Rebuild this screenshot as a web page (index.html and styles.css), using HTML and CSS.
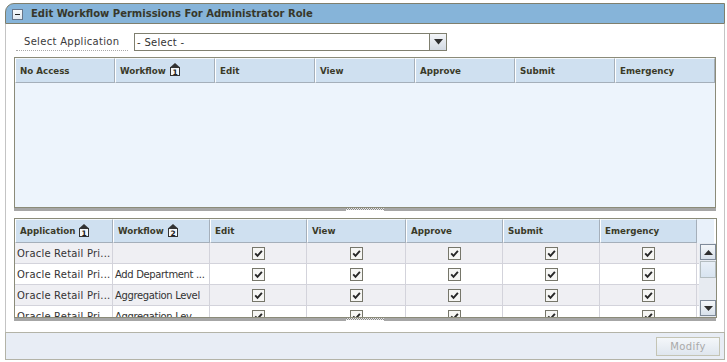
FILE: index.html
```html
<!DOCTYPE html>
<html>
<head>
<meta charset="utf-8">
<link rel="stylesheet" href="styles.css">
</head>
<body>
<div class="panel">
  <div class="hdr"><span class="collapse"></span><span class="title">Edit Workflow Permissions For Administrator Role</span></div>
  <div class="content">
    <div class="selrow">
      <label class="sellabel">Select Application</label>
      <div class="select">
        <div class="selfield">- Select -</div>
        <div class="ddbtn"><svg width="9" height="6" viewBox="0 0 9 6"><path d="M0 0h9L4.5 5.5z" fill="#2e2e2e"/></svg></div>
      </div>
    </div>
    <div class="tbl1">
      <div class="thead">
        <div class="th w100">No Access</div>
        <div class="th w100">Workflow <svg class="sort" width="10" height="13" viewBox="0 0 10 13"><path d="M5 0L9.5 4H0.5z" fill="#333"/><rect x="0.5" y="4.5" width="9" height="8" fill="#f4f6f8" stroke="#333"/><text x="5" y="11.5" text-anchor="middle" font-size="7.5" font-family="DejaVu Sans" fill="#222">1</text></svg></div>
        <div class="th w100">Edit</div>
        <div class="th w100">View</div>
        <div class="th w100">Approve</div>
        <div class="th w100">Submit</div>
        <div class="th w100">Emergency</div>
      </div>
      <div class="tbody1"></div>
    </div>
    <div class="split"><span class="grip"></span></div>
    <div class="tbl2">
      <div class="thead2">
        <div class="th c1">Application <svg class="sort" width="10" height="13" viewBox="0 0 10 13"><path d="M5 0L9.5 4H0.5z" fill="#333"/><rect x="0.5" y="4.5" width="9" height="8" fill="#f4f6f8" stroke="#333"/><text x="5" y="11.5" text-anchor="middle" font-size="7.5" font-family="DejaVu Sans" fill="#222">1</text></svg></div>
        <div class="th c2">Workflow <svg class="sort" width="10" height="13" viewBox="0 0 10 13"><path d="M5 0L9.5 4H0.5z" fill="#333"/><rect x="0.5" y="4.5" width="9" height="8" fill="#f4f6f8" stroke="#333"/><text x="5" y="11.5" text-anchor="middle" font-size="7.5" font-family="DejaVu Sans" fill="#222">2</text></svg></div>
        <div class="th c3">Edit</div>
        <div class="th c4">View</div>
        <div class="th c5">Approve</div>
        <div class="th c6">Submit</div>
        <div class="th c7">Emergency</div>
        <div class="thfill"></div>
      </div>
      <div class="rowswrap">
        <div class="rows">
          <div class="row">
            <div class="td c1">Oracle Retail Pri...</div><div class="td c2 wf"></div>
            <div class="td c3 ck"><svg width="13" height="13" viewBox="0 0 13 13"><rect x=".5" y=".5" width="12" height="12" fill="#f6f6f4" stroke="#76766a"/><path d="M3.2 6.4l2.3 2.4 4.4-5" fill="none" stroke="#262626" stroke-width="1.9"/></svg></div>
            <div class="td c4 ck"><svg width="13" height="13" viewBox="0 0 13 13"><rect x=".5" y=".5" width="12" height="12" fill="#f6f6f4" stroke="#76766a"/><path d="M3.2 6.4l2.3 2.4 4.4-5" fill="none" stroke="#262626" stroke-width="1.9"/></svg></div>
            <div class="td c5 ck"><svg width="13" height="13" viewBox="0 0 13 13"><rect x=".5" y=".5" width="12" height="12" fill="#f6f6f4" stroke="#76766a"/><path d="M3.2 6.4l2.3 2.4 4.4-5" fill="none" stroke="#262626" stroke-width="1.9"/></svg></div>
            <div class="td c6 ck"><svg width="13" height="13" viewBox="0 0 13 13"><rect x=".5" y=".5" width="12" height="12" fill="#f6f6f4" stroke="#76766a"/><path d="M3.2 6.4l2.3 2.4 4.4-5" fill="none" stroke="#262626" stroke-width="1.9"/></svg></div>
            <div class="td c7 ck"><svg width="13" height="13" viewBox="0 0 13 13"><rect x=".5" y=".5" width="12" height="12" fill="#f6f6f4" stroke="#76766a"/><path d="M3.2 6.4l2.3 2.4 4.4-5" fill="none" stroke="#262626" stroke-width="1.9"/></svg></div>
          </div>
          <div class="row">
            <div class="td c1">Oracle Retail Pri...</div><div class="td c2 wf">Add Department ...</div>
            <div class="td c3 ck"><svg width="13" height="13" viewBox="0 0 13 13"><rect x=".5" y=".5" width="12" height="12" fill="#f6f6f4" stroke="#76766a"/><path d="M3.2 6.4l2.3 2.4 4.4-5" fill="none" stroke="#262626" stroke-width="1.9"/></svg></div>
            <div class="td c4 ck"><svg width="13" height="13" viewBox="0 0 13 13"><rect x=".5" y=".5" width="12" height="12" fill="#f6f6f4" stroke="#76766a"/><path d="M3.2 6.4l2.3 2.4 4.4-5" fill="none" stroke="#262626" stroke-width="1.9"/></svg></div>
            <div class="td c5 ck"><svg width="13" height="13" viewBox="0 0 13 13"><rect x=".5" y=".5" width="12" height="12" fill="#f6f6f4" stroke="#76766a"/><path d="M3.2 6.4l2.3 2.4 4.4-5" fill="none" stroke="#262626" stroke-width="1.9"/></svg></div>
            <div class="td c6 ck"><svg width="13" height="13" viewBox="0 0 13 13"><rect x=".5" y=".5" width="12" height="12" fill="#f6f6f4" stroke="#76766a"/><path d="M3.2 6.4l2.3 2.4 4.4-5" fill="none" stroke="#262626" stroke-width="1.9"/></svg></div>
            <div class="td c7 ck"><svg width="13" height="13" viewBox="0 0 13 13"><rect x=".5" y=".5" width="12" height="12" fill="#f6f6f4" stroke="#76766a"/><path d="M3.2 6.4l2.3 2.4 4.4-5" fill="none" stroke="#262626" stroke-width="1.9"/></svg></div>
          </div>
          <div class="row">
            <div class="td c1">Oracle Retail Pri...</div><div class="td c2 wf">Aggregation Level</div>
            <div class="td c3 ck"><svg width="13" height="13" viewBox="0 0 13 13"><rect x=".5" y=".5" width="12" height="12" fill="#f6f6f4" stroke="#76766a"/><path d="M3.2 6.4l2.3 2.4 4.4-5" fill="none" stroke="#262626" stroke-width="1.9"/></svg></div>
            <div class="td c4 ck"><svg width="13" height="13" viewBox="0 0 13 13"><rect x=".5" y=".5" width="12" height="12" fill="#f6f6f4" stroke="#76766a"/><path d="M3.2 6.4l2.3 2.4 4.4-5" fill="none" stroke="#262626" stroke-width="1.9"/></svg></div>
            <div class="td c5 ck"><svg width="13" height="13" viewBox="0 0 13 13"><rect x=".5" y=".5" width="12" height="12" fill="#f6f6f4" stroke="#76766a"/><path d="M3.2 6.4l2.3 2.4 4.4-5" fill="none" stroke="#262626" stroke-width="1.9"/></svg></div>
            <div class="td c6 ck"><svg width="13" height="13" viewBox="0 0 13 13"><rect x=".5" y=".5" width="12" height="12" fill="#f6f6f4" stroke="#76766a"/><path d="M3.2 6.4l2.3 2.4 4.4-5" fill="none" stroke="#262626" stroke-width="1.9"/></svg></div>
            <div class="td c7 ck"><svg width="13" height="13" viewBox="0 0 13 13"><rect x=".5" y=".5" width="12" height="12" fill="#f6f6f4" stroke="#76766a"/><path d="M3.2 6.4l2.3 2.4 4.4-5" fill="none" stroke="#262626" stroke-width="1.9"/></svg></div>
          </div>
          <div class="row">
            <div class="td c1">Oracle Retail Pri...</div><div class="td c2 wf">Aggregation Lev...</div>
            <div class="td c3 ck"><svg width="13" height="13" viewBox="0 0 13 13"><rect x=".5" y=".5" width="12" height="12" fill="#f6f6f4" stroke="#76766a"/><path d="M3.2 6.4l2.3 2.4 4.4-5" fill="none" stroke="#262626" stroke-width="1.9"/></svg></div>
            <div class="td c4 ck"><svg width="13" height="13" viewBox="0 0 13 13"><rect x=".5" y=".5" width="12" height="12" fill="#f6f6f4" stroke="#76766a"/><path d="M3.2 6.4l2.3 2.4 4.4-5" fill="none" stroke="#262626" stroke-width="1.9"/></svg></div>
            <div class="td c5 ck"><svg width="13" height="13" viewBox="0 0 13 13"><rect x=".5" y=".5" width="12" height="12" fill="#f6f6f4" stroke="#76766a"/><path d="M3.2 6.4l2.3 2.4 4.4-5" fill="none" stroke="#262626" stroke-width="1.9"/></svg></div>
            <div class="td c6 ck"><svg width="13" height="13" viewBox="0 0 13 13"><rect x=".5" y=".5" width="12" height="12" fill="#f6f6f4" stroke="#76766a"/><path d="M3.2 6.4l2.3 2.4 4.4-5" fill="none" stroke="#262626" stroke-width="1.9"/></svg></div>
            <div class="td c7 ck"><svg width="13" height="13" viewBox="0 0 13 13"><rect x=".5" y=".5" width="12" height="12" fill="#f6f6f4" stroke="#76766a"/><path d="M3.2 6.4l2.3 2.4 4.4-5" fill="none" stroke="#262626" stroke-width="1.9"/></svg></div>
          </div>
        </div>
        <div class="vscroll">
          <div class="sbtn"><svg width="9" height="5" viewBox="0 0 9 5"><path d="M4.5 0L9 5H0z" fill="#2e2e2e"/></svg></div>
          <div class="thumb"></div>
          <div class="track"></div>
          <div class="sbtn"><svg width="9" height="5" viewBox="0 0 9 5"><path d="M0 0h9L4.5 5z" fill="#2e2e2e"/></svg></div>
        </div>
      </div>
    </div>
    <div class="split split2"><span class="grip"></span></div>
  </div>
  <div class="footer"><button class="modify" disabled>Modify</button></div>
</div>
</body>
</html>
```

FILE: styles.css
```css
body {
  margin: 0;
  background: #ffffff;
  font-family: "DejaVu Sans", Verdana, sans-serif;
  font-size: 10px;
  color: #333333;
}

.panel {
  margin: 3px 0 0 5px;
  width: 720px;
}

.hdr {
  height: 21px;
  box-sizing: border-box;
  border: 1px solid #7f7f6d;
  border-top-left-radius: 9px;
  background: #86b4d9;
  display: flex;
  align-items: center;
  padding-left: 6px;
}

.collapse {
  width: 11px;
  height: 11px;
  box-sizing: border-box;
  border: 1px solid #67768a;
  background: linear-gradient(#f7f9fb, #e2e9f1);
  display: flex;
  align-items: center;
  justify-content: center;
  margin-right: 8px;
  margin-top: 1px;
}

.collapse::after {
  content: "";
  width: 5px;
  height: 1px;
  background: #222222;
}

.title {
  font-weight: bold;
  font-size: 10px;
  color: #37372a;
}

.content {
  height: 308px;
  box-sizing: border-box;
  border-left: 1px solid #c4c4c4;
  border-right: 1px solid #c4c4c4;
  padding: 9px 8px 0 8px;
  display: flex;
  flex-direction: column;
}

.selrow {
  display: flex;
  height: 18px;
}

.sellabel {
  margin-left: 2px;
  width: 112px;
  box-sizing: border-box;
  padding-left: 8px;
  border-bottom: 1px dotted #a8a8a8;
  display: flex;
  align-items: center;
  letter-spacing: 0.3px;
  color: #3a3a3a;
}

.select {
  margin-left: 6px;
  display: flex;
}

.selfield {
  width: 295px;
  height: 18px;
  box-sizing: border-box;
  border: 1px solid #7f7f6f;
  border-right: none;
  padding-left: 2px;
  display: flex;
  align-items: center;
  letter-spacing: 0.3px;
}

.ddbtn {
  width: 18px;
  height: 18px;
  box-sizing: border-box;
  border: 1px solid #7f7f6f;
  background: linear-gradient(#f3f5f8, #d3dae3);
  display: flex;
  align-items: center;
  justify-content: center;
}

.tbl1 {
  margin-top: 6px;
  border: 1px solid #8b8b79;
}

.thead {
  display: flex;
  height: 25px;
}

.th {
  box-sizing: border-box;
  background: #cfe0f0;
  border-left: 1px solid #ffffff;
  border-top: 1px solid #f4f8fc;
  border-right: 1px solid #a5afba;
  border-bottom: 1px solid #a5afba;
  padding-left: 4px;
  display: flex;
  align-items: center;
  font-weight: bold;
  font-size: 8.7px;
  color: #3a3a28;
  white-space: nowrap;
}

.w100 {
  width: 100px;
}

.sort {
  margin-left: 4px;
  margin-top: -2px;
}

.tbody1 {
  height: 124px;
  background: #edf4fc;
}

.split {
  height: 10px;
  display: flex;
  justify-content: center;
  align-items: flex-start;
  background: linear-gradient(#a6a6a6, #a6a6a6) top left / 100% 3px no-repeat;
}

.split2 {
  height: 14px;
}

.grip {
  width: 38px;
  height: 3px;
  background:
    repeating-linear-gradient(90deg, #8c8c8c 0 1px, #e6e6e6 1px 2px) top left / 100% 1px no-repeat,
    repeating-linear-gradient(90deg, #e6e6e6 0 1px, #8c8c8c 1px 2px) 0 1px / 100% 1px no-repeat,
    #ffffff;
}

.tbl2 {
  width: 701px;
  border: 1px solid #8b8b79;
}

.thead2 {
  display: flex;
  height: 24px;
}

.c1 { width: 98px; }
.c2 { width: 97px; }
.c3 { width: 97px; }
.c4 { width: 99px; }
.c5 { width: 97px; }
.c6 { width: 97px; }
.c7 { width: 97px; }

.thfill {
  width: 17px;
  background: #e9f1fa;
}

.rowswrap {
  display: flex;
  height: 74px;
}

.rows {
  flex: 1;
  overflow: hidden;
}

.row {
  display: flex;
  height: 21px;
  box-sizing: border-box;
  border-bottom: 1px solid #d3d3db;
  background: #ffffff;
}

.row:nth-child(odd) {
  background: #efeff3;
}

.td {
  flex: none;
  box-sizing: border-box;
  border-right: 1px solid #d3d3db;
  display: flex;
  align-items: center;
  padding-left: 2px;
  white-space: nowrap;
  overflow: hidden;
  letter-spacing: 0.2px;
  color: #333333;
}

.td.wf {
  letter-spacing: -0.35px;
}

.td.ck {
  justify-content: center;
  padding-left: 0;
}

.vscroll {
  width: 17px;
  box-sizing: border-box;
  padding: 1px 0 1px 1px;
  background: #e7ebf1;
  display: flex;
  flex-direction: column;
}

.sbtn {
  height: 16px;
  box-sizing: border-box;
  border: 1px solid #7f8b9a;
  background: linear-gradient(#f4f7fa, #d8e1eb);
  display: flex;
  align-items: center;
  justify-content: center;
}

.thumb {
  height: 17px;
  box-sizing: border-box;
  margin-top: 1px;
  border: 1px solid #b4bdc0;
  background: linear-gradient(#e8eff7, #d8e4f0);
}

.track {
  flex: 1;
}

.footer {
  height: 28px;
  box-sizing: border-box;
  border: 1px solid #b3b3a7;
  background: #e8edf5;
  display: flex;
  justify-content: flex-end;
  align-items: flex-start;
  padding: 4px 4px 0 0;
}

.modify {
  width: 64px;
  height: 19px;
  box-sizing: border-box;
  border: 1px solid #c4c4b4;
  background: linear-gradient(#f4f7fa, #dfe6ee);
  color: #a9a9a9;
  font-family: "DejaVu Sans", Verdana, sans-serif;
  font-size: 10px;
  letter-spacing: 0.4px;
  padding: 0;
}
```
